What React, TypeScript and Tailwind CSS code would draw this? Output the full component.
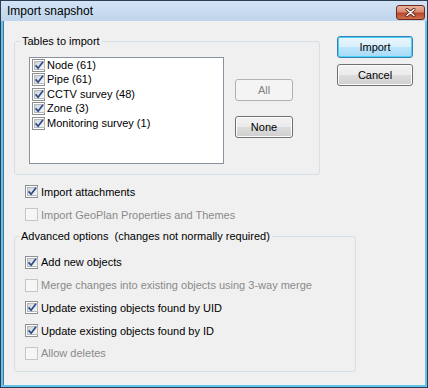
import React from "react";

function Box({ checked, disabled }: { checked?: boolean; disabled?: boolean }) {
  if (disabled) {
    return <span className="w-[13px] h-[13px] shrink-0 border border-[#c6c6c6] bg-[#f6f6f6]" />;
  }
  return (
    <span className="w-[13px] h-[13px] shrink-0 border border-[#8e8f8f] bg-white p-[1px] flex">
      <span className="flex-1 border border-[#b4b9bf] bg-gradient-to-br from-[#cfd3d9] to-[#f7f7f7] flex items-center justify-center">
        {checked && (
          <svg width="9" height="9" viewBox="0 0 9 9" className="overflow-visible">
            <path d="M0.6 4.4 L3.1 7.2 L8 0.8" fill="none" stroke="#2c4a86" strokeWidth="1.7" />
          </svg>
        )}
      </span>
    </span>
  );
}

function Row({ label, checked, disabled, h }: { label: string; checked?: boolean; disabled?: boolean; h: string }) {
  return (
    <div className={`flex items-center gap-[3px] ${h}`}>
      <Box checked={checked} disabled={disabled} />
      <span className={`whitespace-nowrap leading-[14px] ${disabled ? "text-[#8a8a8a]" : "text-black"}`}>{label}</span>
    </div>
  );
}

function Btn({ children, kind }: { children: React.ReactNode; kind?: "default" | "disabled" }) {
  if (kind === "default") {
    return (
      <div className="h-[22px] rounded-[3px] border border-[#3c7fb1] shadow-[inset_0_0_0_1px_#48d3fb] bg-[linear-gradient(#eaf6fd_0%,#d9f0fc_50%,#bee6fd_50%,#a7d9f5_100%)] flex items-center justify-center">
        {children}
      </div>
    );
  }
  if (kind === "disabled") {
    return (
      <div className="h-[22px] rounded-[3px] border border-[#adb2b5] bg-[#f4f4f4] text-[#838383] flex items-center justify-center">
        {children}
      </div>
    );
  }
  return (
    <div className="h-[22px] rounded-[3px] border border-[#707070] shadow-[inset_0_0_0_1px_#fcfcfc] bg-[linear-gradient(#f2f2f2_0%,#ebebeb_50%,#dddddd_50%,#cfcfcf_100%)] flex items-center justify-center">
      {children}
    </div>
  );
}

export default function App() {
  const tables = ["Node (61)", "Pipe (61)", "CCTV survey (48)", "Zone (3)", "Monitoring survey (1)"];
  return (
    <div className="w-[428px] h-[388px] border border-[#2b3d52] bg-[#c3d8ee] flex flex-col font-['Liberation_Sans',Arial,sans-serif] text-[11px] leading-[16px] text-black">
      <div className="h-[20px] flex items-center pl-[6px] pr-[2px] bg-gradient-to-b from-[#d3e3f4] to-[#bed5ec]">
        <span className="text-[12px]">Import snapshot</span>
        <div className="ml-auto mt-[3px] w-[29px] h-[15px] rounded-[3px] border border-[#6e2a1c] bg-[linear-gradient(#e8b2a0_0%,#d98a70_45%,#b8482c_55%,#d0704c_100%)] flex items-center justify-center">
          <svg width="11" height="9" viewBox="0 0 11 9">
            <path d="M2 1.5 L9 7.5 M9 1.5 L2 7.5" stroke="#5a2418" strokeWidth="3" strokeLinecap="round" />
            <path d="M2 1.5 L9 7.5 M9 1.5 L2 7.5" stroke="#ffffff" strokeWidth="1.6" strokeLinecap="round" />
          </svg>
        </div>
      </div>
      <div className="flex-1 flex pl-[2px] pr-[2px] pb-[2px] bg-[#62c4ea]">
        <div className="flex-1 bg-[#f0f0f0] border-l border-[#4a74a0] pt-[12px] pl-[10px] flex flex-col">
          <div className="flex items-start">
            <fieldset className="w-[306px] border border-[#d5dfe5] rounded-[3px] p-0 m-0">
              <legend className="ml-[5px] px-[2px] leading-[16px]">Tables to import</legend>
              <div className="flex pl-[14px] pt-[8px] pb-[10px]">
                <div className="w-[195px] h-[107px] border border-[#8a939d] bg-white">
                  {tables.map((t) => (
                    <div key={t} className="flex items-center h-[14.5px] pl-[2px] gap-[2px]">
                      <Box checked />
                      <span className="whitespace-nowrap leading-[13px]">{t}</span>
                    </div>
                  ))}
                </div>
                <div className="ml-[11px] mt-[22px] w-[58px] flex flex-col gap-[15px]">
                  <Btn kind="disabled">All</Btn>
                  <Btn>None</Btn>
                </div>
              </div>
            </fieldset>
            <div className="ml-[17px] mt-[3px] w-[76px] flex flex-col gap-[6px]">
              <Btn kind="default">Import</Btn>
              <Btn>Cancel</Btn>
            </div>
          </div>
          <div className="pl-[11px] mt-[5px]">
            <Row label="Import attachments" checked h="h-[23px]" />
            <Row label="Import GeoPlan Properties and Themes" disabled h="h-[23px]" />
          </div>
          <fieldset className="mt-[2px] w-[342px] border border-[#d5dfe5] rounded-[3px] p-0 m-0">
            <legend className="ml-[4px] px-[2px] leading-[16px] whitespace-pre">Advanced options  (changes not normally required)</legend>
            <div className="pl-[10px] pt-[7px] pb-[6px]">
              <Row label="Add new objects" checked h="h-[22.75px]" />
              <Row label="Merge changes into existing objects using 3-way merge" disabled h="h-[22.75px]" />
              <Row label="Update existing objects found by UID" checked h="h-[22.75px]" />
              <Row label="Update existing objects found by ID" checked h="h-[22.75px]" />
              <Row label="Allow deletes" disabled h="h-[22.75px]" />
            </div>
          </fieldset>
        </div>
      </div>
    </div>
  );
}
